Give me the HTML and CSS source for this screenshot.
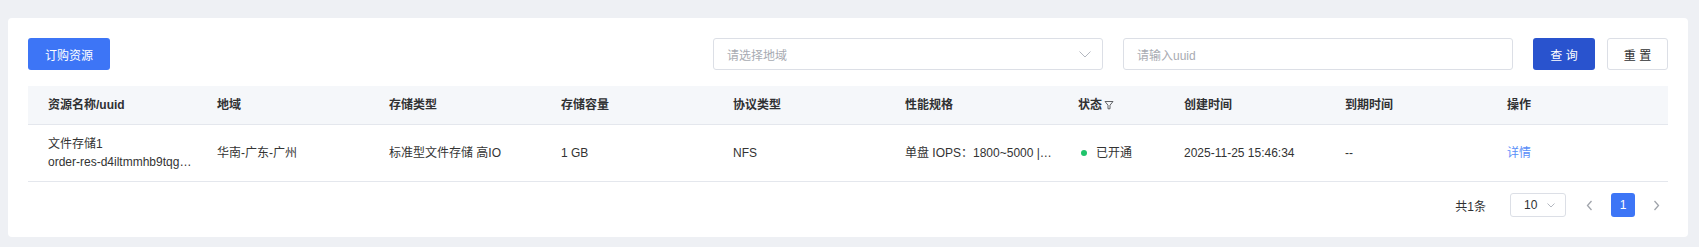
FILE: index.html
```html
<!DOCTYPE html>
<html lang="zh-CN">
<head>
    <meta charset="UTF-8">
    <meta name="viewport" content="width=device-width, initial-scale=1.0">
    <title>文件存储</title>
    <link rel="stylesheet" href="styles.css">
</head>
<body>
    <div class="card">
        <div class="toolbar">
            <button class="btn btn-primary">订购资源</button>
            <div class="filters">
                <div class="select">
                    <span class="placeholder">请选择地域</span>
                    <svg class="chevron" width="12" height="7" viewBox="0 0 12 7"><path d="M0.5 0.5L6 6L11.5 0.5" fill="none" stroke="#b4b8c0" stroke-width="1"/></svg>
                </div>
                <div class="input">
                    <span class="placeholder">请输入uuid</span>
                </div>
                <button class="btn btn-query">查 询</button>
                <button class="btn btn-default">重 置</button>
            </div>
        </div>

        <div class="table">
            <div class="tr thead">
                <div class="td">资源名称/uuid</div>
                <div class="td">地域</div>
                <div class="td">存储类型</div>
                <div class="td">存储容量</div>
                <div class="td">协议类型</div>
                <div class="td">性能规格</div>
                <div class="td">状态<svg class="filter" width="10" height="10" viewBox="0 0 10 10"><path d="M1 1.5H9L6 5.2V8.8H4V5.2Z" fill="none" stroke="#606266" stroke-width="1"/></svg></div>
                <div class="td">创建时间</div>
                <div class="td">到期时间</div>
                <div class="td">操作</div>
            </div>
            <div class="tr tbody">
                <div class="td">
                    <div>文件存储1</div>
                    <div title="order-res-d4iltmmhb9tqg">order-res-d4iltmmhb9tqg…</div>
                </div>
                <div class="td">华南-广东-广州</div>
                <div class="td">标准型文件存储 高IO</div>
                <div class="td">1 GB</div>
                <div class="td">NFS</div>
                <div class="td"><div>单盘 IOPS：1800~5000 |…</div></div>
                <div class="td"><span class="dot"></span>已开通</div>
                <div class="td">2025-11-25 15:46:34</div>
                <div class="td">--</div>
                <div class="td"><a class="link">详情</a></div>
            </div>
        </div>

        <div class="pager">
            <span class="total">共1条</span>
            <div class="size">
                <span>10</span>
                <svg width="8" height="5" viewBox="0 0 8 5"><path d="M0.5 0.5L4 4L7.5 0.5" fill="none" stroke="#b4b8c0" stroke-width="1"/></svg>
            </div>
            <span class="arrow"><svg width="7" height="11" viewBox="0 0 7 11"><path d="M5.5 1L1.5 5.5L5.5 10" fill="none" stroke="#a0a4ab" stroke-width="1.3"/></svg></span>
            <span class="page active">1</span>
            <span class="arrow"><svg width="7" height="11" viewBox="0 0 7 11"><path d="M1.5 1L5.5 5.5L1.5 10" fill="none" stroke="#a0a4ab" stroke-width="1.3"/></svg></span>
        </div>
    </div>
</body>
</html>
```

FILE: styles.css
```css
body {
    margin: 0;
    padding: 18px 11px 11px 8px;
    background: #eef0f4;
    font-family: "Liberation Sans", "Noto Sans CJK SC", sans-serif;
    font-size: 12px;
    color: #303133;
}

.card {
    background: #fff;
    border-radius: 4px;
    padding: 20px 20px 20px 20px;
}

.toolbar {
    display: flex;
    justify-content: space-between;
    align-items: center;
    height: 32px;
}

.filters {
    display: flex;
    align-items: center;
}

.btn {
    height: 32px;
    padding: 0;
    font-family: inherit;
    font-size: 12px;
    white-space: nowrap;
    border-radius: 3px;
    border: 1px solid transparent;
    cursor: pointer;
}

.btn-primary {
    width: 82px;
    background: #3d75f6;
    color: #fff;
}

.btn-query {
    width: 62px;
    margin-left: 20px;
    background: #2953ce;
    color: #fff;
}

.btn-default {
    width: 61px;
    margin-left: 12px;
    background: #fff;
    border-color: #dcdfe6;
    color: #303133;
}

.select, .input {
    box-sizing: border-box;
    height: 32px;
    width: 390px;
    border: 1px solid #dcdfe6;
    border-radius: 3px;
    padding: 0 11px 0 13px;
    display: flex;
    align-items: center;
    justify-content: space-between;
}

.input {
    margin-left: 20px;
}

.placeholder {
    color: #a8abb2;
}

.table {
    margin-top: 16px;
}

.tr {
    display: grid;
    grid-template-columns: 169px 172px 172px 172px 172px 173px 106px 161px 162px 182px;
    border-bottom: 1px solid #e4e7ed;
}

.thead {
    height: 38px;
    background: #f5f7fa;
    font-weight: bold;
    color: #303133;
}

.tbody {
    height: 56px;
    color: #333;
}

.td {
    padding: 0 4px 0 20px;
    display: flex;
    flex-direction: column;
    justify-content: center;
    line-height: 18px;
    min-width: 0;
    white-space: nowrap;
}

.thead .td:nth-child(7), .tbody .td:nth-child(7) {
    flex-direction: row;
    align-items: center;
    justify-content: flex-start;
}

.filter {
    margin-left: 2px;
}

.dot {
    width: 6px;
    height: 6px;
    border-radius: 50%;
    background: #1fc46b;
    margin: 0 9px 0 3px;
}

.link {
    color: #5a8ef8;
    cursor: pointer;
}

.pager {
    display: flex;
    justify-content: flex-end;
    align-items: center;
    margin-top: 11px;
    height: 24px;
    padding-right: 8px;
}

.total {
    margin-right: 24px;
}

.size {
    box-sizing: border-box;
    width: 56px;
    height: 24px;
    border: 1px solid #dcdfe6;
    border-radius: 3px;
    padding: 0 10px 0 13px;
    display: flex;
    align-items: center;
    justify-content: space-between;
    margin-right: 19px;
}

.arrow {
    width: 8px;
    display: flex;
    justify-content: center;
}

.page {
    width: 24px;
    height: 24px;
    margin: 0 17px 0 18px;
    border-radius: 3px;
    display: flex;
    align-items: center;
    justify-content: center;
}

.page.active {
    background: #3d75f6;
    color: #fff;
}
```
